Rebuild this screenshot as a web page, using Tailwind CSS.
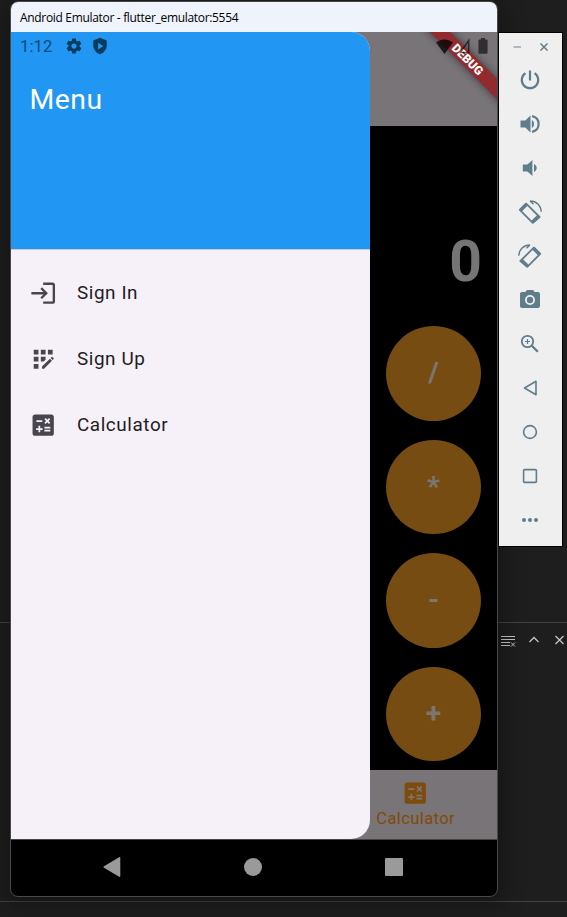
<!DOCTYPE html>
<html lang="en">
<head>
<meta charset="utf-8">
<title>Android Emulator</title>
<script src="https://cdn.jsdelivr.net/npm/@tailwindcss/browser@4"></script>
</head>
<body class="relative h-[917px] w-[567px] overflow-hidden bg-[#1e1e1e] font-['Roboto',sans-serif]">

<!-- Editor panel behind the windows -->
<div class="flex h-full flex-col">
  <div class="h-[622px]"></div>
  <div class="flex h-[280px] items-start justify-end gap-[10px] border-y border-[#414141] pt-[9px] pr-px text-[#c5c5c5]">
    <svg class="h-4 w-4" viewBox="0 0 16 16" fill="none" stroke="currentColor"><path d="M1 4.500h14M1 7.500h14M1 10.500h9M1 13.500h9M11 10.500l4 4M15 10.500l-4 4"/></svg>
    <svg class="h-4 w-4" viewBox="0 0 16 16" fill="none" stroke="currentColor" stroke-width="1.300"><path d="M3.500 10l4.500-4.500 4.500 4.500"/></svg>
    <svg class="-mr-[2px] h-4 w-4" viewBox="0 0 16 16" fill="none" stroke="currentColor" stroke-width="1.300"><path d="M3.500 4l8 8M11.500 4l-8 8"/></svg>
  </div>
</div>

<!-- Emulator window -->
<div class="absolute top-[1px] left-[10px] flex h-[896px] w-[488px] flex-col overflow-hidden rounded-[8px] border border-[#484848] bg-black shadow-[0_4px_22px_4px_rgba(0,0,0,0.35)]">
  <div class="flex h-[30px] shrink-0 items-center bg-[#eff3fb] pt-px pl-[9px] font-['Open_Sans',sans-serif] text-[12px] tracking-[-0.320px] text-black"><span class="whitespace-nowrap">Android Emulator - flutter_emulator:5554</span></div>

  <div class="relative flex h-[807px] shrink-0 flex-col overflow-hidden">
    <div class="h-[94px] bg-[#797478]"></div>
    <div class="flex h-[644px] flex-col items-end bg-black pr-[16px]">
      <div class="mt-[103px] -mr-px flex h-[66px] items-center text-[57px] leading-[66px] font-bold text-[#757575]">0</div>
      <div class="mt-[31px] flex flex-col gap-[19px] text-[28.400px] font-bold text-[#7b7672]">
        <div class="flex h-[94.500px] w-[95px] items-center justify-center rounded-full bg-[#774c13] pt-px">/</div>
        <div class="flex h-[94.500px] w-[95px] items-center justify-center rounded-full bg-[#774c13] pt-px">*</div>
        <div class="flex h-[94.500px] w-[95px] items-center justify-center rounded-full bg-[#774c13] pt-px">-</div>
        <div class="flex h-[94.500px] w-[95px] items-center justify-center rounded-full bg-[#774c13] pt-px">+</div>
      </div>
    </div>
    <div class="flex h-[69px] justify-end bg-[#797478] pr-[42px] text-[#7f4b0a]">
      <div class="flex flex-col items-center pt-[9px]">
        <svg class="h-[28.400px] w-[28.400px]" viewBox="0 0 24 24" fill="currentColor"><path d="M19 3H5c-1.100 0-2 .9-2 2v14c0 1.100.9 2 2 2h14c1.100 0 2-.9 2-2V5c0-1.100-.9-2-2-2zm-5.970 4.060L14.090 6l1.410 1.410L16.910 6l1.060 1.060-1.410 1.410 1.410 1.410-1.060 1.060-1.410-1.400-1.410 1.410-1.060-1.060 1.410-1.410-1.410-1.420zm-6.780.66h5v1.500h-5v-1.500zM11.500 16h-2v2H8v-2H6v-1.500h2v-2h1.500v2h2V16zm6.500 1.250h-5v-1.500h5v1.500zm0-2.500h-5v-1.500h5v1.500z"/></svg>
        <span class="text-[16.500px] leading-[24px] tracking-[0.400px]">Calculator</span>
      </div>
    </div>

    <!-- Navigation drawer -->
    <div class="absolute top-0 left-0 flex h-[807px] w-[359px] flex-col overflow-hidden rounded-r-[19px] bg-[#f6f1f9]">
      <div class="h-[218px] shrink-0 border-b border-[#c9cbdc] bg-[#2196f3] pt-[51px] pl-[18.500px] text-[28.400px] leading-[34px] tracking-[0.500px] text-white">Menu</div>
      <div class="flex flex-col pt-[10px] text-[18.900px] tracking-[0.590px] text-[#1f1c22]">
        <div class="flex h-[66px] items-center gap-[20px] pl-[17.500px]">
          <svg class="h-[28.400px] w-[28.400px] text-[#49454e]" viewBox="0 0 24 24" fill="currentColor"><path d="M11 7L9.600 8.400l2.600 2.600H2v2h10.200l-2.600 2.600L11 17l5-5-5-5zm9 12h-8v2h8c1.100 0 2-.9 2-2V5c0-1.100-.9-2-2-2h-8v2h8v14z"/></svg>
          <span>Sign In</span>
        </div>
        <div class="flex h-[66px] items-center gap-[20px] pl-[17.500px]">
          <svg class="h-[28.400px] w-[28.400px] text-[#49454e]" viewBox="0 0 24 24" fill="currentColor"><path d="M10 4h4v4h-4zM4 16h4v4H4zM4 10h4v4H4zM4 4h4v4H4zM14 12.420V10h-4v4h2.420zM20.880 11.290l-1.170-1.170c-.16-.16-.42-.16-.58 0l-.88.88L20 12.750l.88-.88c.16-.16.16-.42 0-.58zM11 18.250V20h1.750l6.670-6.670-1.750-1.750zM16 4h4v4h-4z"/></svg>
          <span>Sign Up</span>
        </div>
        <div class="flex h-[66px] items-center gap-[20px] pl-[17.500px]">
          <svg class="h-[28.400px] w-[28.400px] text-[#49454e]" viewBox="0 0 24 24" fill="currentColor"><path d="M19 3H5c-1.100 0-2 .9-2 2v14c0 1.100.9 2 2 2h14c1.100 0 2-.9 2-2V5c0-1.100-.9-2-2-2zm-5.970 4.060L14.090 6l1.410 1.410L16.910 6l1.060 1.060-1.410 1.410 1.410 1.410-1.060 1.060-1.410-1.400-1.410 1.410-1.060-1.060 1.410-1.410-1.410-1.420zm-6.780.66h5v1.500h-5v-1.500zM11.500 16h-2v2H8v-2H6v-1.500h2v-2h1.500v2h2V16zm6.500 1.250h-5v-1.500h5v1.500zm0-2.500h-5v-1.500h5v1.500z"/></svg>
          <span>Calculator</span>
        </div>
      </div>
    </div>

    <!-- Debug ribbon -->
    <div class="absolute top-0 right-0 h-[90px] w-[90px] overflow-hidden">
      <div class="absolute top-[23px] left-[3px] flex h-[14px] w-[120px] rotate-45 items-center justify-center bg-[#912b2e] pr-[7px] text-[12px] leading-[14px] font-black text-white shadow-[0_0_8px_rgba(0,0,0,0.55)]">DEBUG</div>
    </div>

    <!-- Status bar -->
    <div class="absolute top-0 left-0 flex h-[28px] w-full items-center pr-[9px] pl-[9px]">
      <span class="w-[44.500px] pt-px text-[16.700px] tracking-[0.100px] text-[#0d4a78]">1:12</span>
      <svg class="h-[18px] w-[18px] text-[#063d5e]" viewBox="0 0 24 24" fill="currentColor"><path d="M19.430 12.980c.04-.32.070-.64.070-.98s-.03-.66-.070-.98l2.110-1.650c.19-.15.24-.42.12-.64l-2-3.460c-.12-.22-.39-.3-.61-.22l-2.490 1c-.52-.4-1.080-.73-1.690-.98l-.38-2.650C14.460 2.180 14.250 2 14 2h-4c-.25 0-.46.18-.49.42l-.38 2.650c-.61.25-1.170.59-1.690.98l-2.490-1c-.23-.09-.49 0-.61.22l-2 3.460c-.13.22-.07.49.12.64l2.110 1.650c-.04.32-.07.65-.07.98s.03.66.07.98l-2.110 1.650c-.19.15-.24.42-.12.64l2 3.460c.12.22.39.3.61.22l2.490-1c.52.4 1.080.73 1.690.98l.38 2.650c.03.24.24.42.49.42h4c.25 0 .46-.18.49-.42l.38-2.650c.61-.25 1.170-.59 1.690-.98l2.490 1c.23.09.49 0 .61-.22l2-3.460c.12-.22.070-.49-.12-.64l-2.110-1.650zM12 15.500c-1.930 0-3.500-1.570-3.500-3.500s1.570-3.500 3.500-3.500 3.500 1.570 3.500 3.500-1.570 3.500-3.500 3.500z"/></svg>
      <svg class="ml-[8px] h-[18px] w-[18px] text-[#063d5e]" viewBox="0 0 24 24" fill="currentColor"><path fill-rule="evenodd" d="M12 1L3 4.500V11c0 5.600 3.800 10.300 9 12 5.200-1.700 9-6.400 9-12V4.500zM9.500 7.500l7 4.500-7 4.500z"/></svg>
      <div class="ml-auto flex items-center">
        <svg class="h-[15px] w-[17px] text-black/75" viewBox="0 0 19 15" preserveAspectRatio="none" fill="currentColor"><path d="M0 3.500C6 -0.600 13 -0.600 19 3.500L9.500 15z"/></svg>
        <svg class="ml-[6px] h-[16px] w-[11px] text-black/60" viewBox="0 0 11 16" fill="none" stroke="currentColor" stroke-width="1.500"><path d="M1.300 14.500L9.700 2.500V14.500z"/></svg>
        <svg class="ml-[8px] h-[16px] w-[10px] text-[#302e30]" viewBox="0 0 10 16" fill="currentColor"><path d="M3 0h4v1.500h1.300c.9 0 1.300.5 1.300 1.500v11.500c0 .8-.4 1.300-1.200 1.300H1.600c-.8 0-1.200-.5-1.200-1.300V3c0-1 .4-1.500 1.300-1.500H3z"/></svg>
      </div>
    </div>
  </div>

  <!-- System navigation -->
  <div class="flex h-[57px] shrink-0 items-center border-t border-[#444] pb-[2px] pl-[30.500px] text-[#9a9a9a]">
    <div class="flex w-[141px] justify-center"><svg class="h-5 w-[18px]" viewBox="0 0 18 20" fill="currentColor"><path d="M17.300 0.800v18.400c0 .8-.6.900-1.200.5L1 10.800c-.8-.5-.8-1.100 0-1.600L16.100.3c.6-.4 1.200-.3 1.200.5z"/></svg></div>
    <div class="flex w-[141px] justify-center"><div class="h-[17.500px] w-[17.500px] rounded-full bg-[#9a9a9a]"></div></div>
    <div class="flex w-[141px] justify-center"><div class="h-[18px] w-[18px] rounded-[1px] bg-[#9a9a9a]"></div></div>
  </div>
</div>

<!-- Emulator toolbar -->
<div class="absolute top-[32px] left-[498px] flex h-[515px] w-[65px] flex-col items-center border border-black bg-[#efefef] pr-px text-[#607d8b]">
  <div class="flex h-[25px] w-full shrink-0 items-center justify-center gap-[17px] pt-[3px]">
    <svg class="h-[10px] w-[10px]" viewBox="0 0 10 10" stroke="#a3b3bc" stroke-width="1.800"><path d="M1.500 5h7.500"/></svg>
    <svg class="h-[10px] w-[10px]" viewBox="0 0 10 10" stroke="currentColor" stroke-width="1.500"><path d="M1.500 1.500l7 7M8.500 1.500l-7 7"/></svg>
  </div>
  <div class="flex h-[44px] shrink-0 items-center"><svg class="h-6 w-6" viewBox="0 0 24 24" fill="none" stroke="currentColor" stroke-width="2.200"><path d="M12 2.500v10M7.400 5.200a8.200 8.200 0 1 0 9.200 0"/></svg></div>
  <div class="flex h-[44px] shrink-0 items-center"><svg class="h-6 w-6" viewBox="0 0 24 24" fill="currentColor"><path d="M2.500 8.500h4.800L12.500 3.500v17l-5.200-5H2.500zM13.800 8c3 1.500 3 6.500 0 8z"/><path d="M14 4.200c8.800 1.800 8.800 13.800 0 15.600" fill="none" stroke="currentColor" stroke-width="2.200"/></svg></div>
  <div class="flex h-[44px] shrink-0 items-center"><svg class="h-6 w-6" viewBox="0 0 24 24" fill="currentColor"><path d="M4.800 8.500h4.600L14.400 4v16l-5-4.500H4.800zM16 8c3.600 1.500 3.600 6.500 0 8z"/></svg></div>
  <div class="flex h-[44px] shrink-0 items-center"><svg class="h-6 w-6 overflow-visible" viewBox="0 0 24 24" fill="none" stroke="currentColor"><path d="M8.200 3.600L21.600 17 14.700 22.800 1.800 9.900z" stroke-width="1.800" stroke-linejoin="round"/><path d="M2.600 10.200L8.800 4M14.500 22l6.500-6.200" stroke-width="3.400"/><path d="M12 1C18.500 1 22.800 5.500 23.300 11.800M12 1l3.500 3.200" stroke-width="1.400"/></svg></div>
  <div class="flex h-[44px] shrink-0 items-center"><svg class="h-6 w-6 -scale-x-100 overflow-visible" viewBox="0 0 24 24" fill="none" stroke="currentColor"><path d="M8.200 3.600L21.600 17 14.700 22.800 1.800 9.900z" stroke-width="1.800" stroke-linejoin="round"/><path d="M2.600 10.200L8.800 4M14.500 22l6.500-6.200" stroke-width="3.400"/><path d="M12 1C18.500 1 22.800 5.500 23.300 11.800M12 1l3.500 3.200" stroke-width="1.400"/></svg></div>
  <div class="flex h-[44px] shrink-0 items-center"><svg class="h-6 w-6" viewBox="0 0 24 24" fill="currentColor"><path fill-rule="evenodd" d="M9 2L7.200 4H4c-1.100 0-2 .9-2 2v12c0 1.100.9 2 2 2h16c1.100 0 2-.9 2-2V6c0-1.100-.9-2-2-2h-3.200L15 2zm3 5a5 5 0 1 1 0 10 5 5 0 0 1 0-10z"/><circle cx="12" cy="12" r="3.200"/></svg></div>
  <div class="flex h-[44px] shrink-0 items-center"><svg class="h-6 w-6" viewBox="0 0 24 24" fill="none" stroke="currentColor"><circle cx="9.500" cy="9.500" r="5.700" stroke-width="1.800"/><path d="M9.500 7v5M7 9.500h5" stroke-width="1.200"/><path d="M13.800 13.800l6 6" stroke-width="2.300"/></svg></div>
  <div class="flex h-[44px] shrink-0 items-center"><svg class="h-6 w-6" viewBox="0 0 24 24" fill="none" stroke="currentColor" stroke-width="1.600" stroke-linejoin="round"><path d="M18 5.300v13.400L6.500 12z"/></svg></div>
  <div class="flex h-[44px] shrink-0 items-center"><svg class="h-6 w-6" viewBox="0 0 24 24" fill="none" stroke="currentColor" stroke-width="1.600"><circle cx="12" cy="12" r="6.400"/></svg></div>
  <div class="flex h-[44px] shrink-0 items-center"><svg class="h-6 w-6" viewBox="0 0 24 24" fill="none" stroke="currentColor" stroke-width="1.600"><rect x="5.600" y="5.600" width="12.800" height="12.800" rx="1"/></svg></div>
  <div class="flex h-[44px] shrink-0 items-center"><svg class="h-6 w-6" viewBox="0 0 24 24" fill="currentColor"><circle cx="6" cy="12" r="2"/><circle cx="12" cy="12" r="2"/><circle cx="18" cy="12" r="2"/></svg></div>
</div>
</body>
</html>
